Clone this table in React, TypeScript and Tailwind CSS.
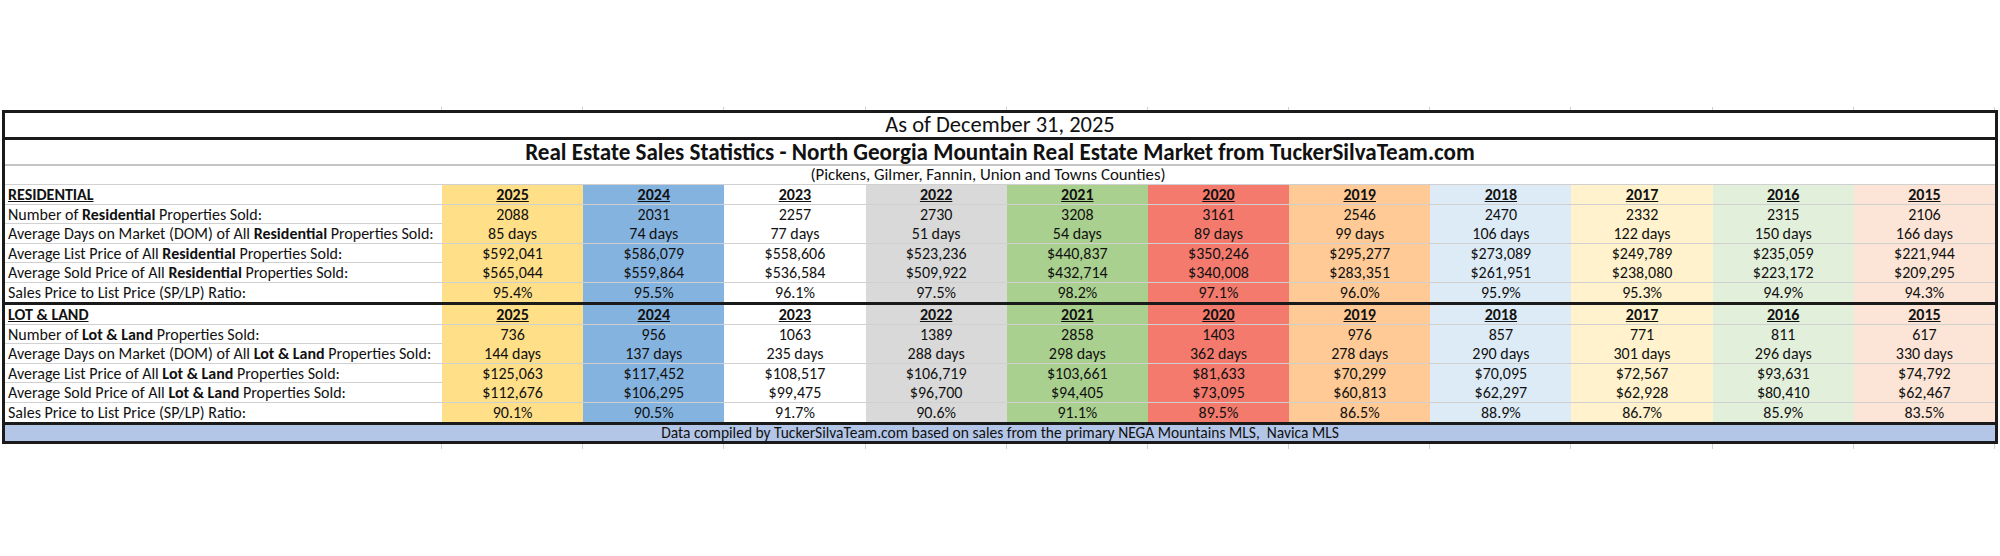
const years = ["2025", "2024", "2023", "2022", "2021", "2020", "2019", "2018", "2017", "2016", "2015"];

// fill colour of each year column, same order as years
const fills = [
  "bg-[#FFDF88]",
  "bg-[#85B3E0]",
  "bg-white",
  "bg-[#D9D9D9]",
  "bg-[#A9D08E]",
  "bg-[#F47A6D]",
  "bg-[#FFCA95]",
  "bg-[#DDEBF7]",
  "bg-[#FFF2CC]",
  "bg-[#E2EFDA]",
  "bg-[#FCE4D6]",
];

type Row = { pre: string; bold?: string; post?: string; values: string[] };

const residential: Row[] = [
  { pre: "Number of ", bold: "Residential", post: " Properties Sold:", values: ["2088", "2031", "2257", "2730", "3208", "3161", "2546", "2470", "2332", "2315", "2106"] },
  { pre: "Average Days on Market (DOM) of All ", bold: "Residential", post: " Properties Sold:", values: ["85 days", "74 days", "77 days", "51 days", "54 days", "89 days", "99 days", "106 days", "122 days", "150 days", "166 days"] },
  { pre: "Average List Price of All ", bold: "Residential", post: " Properties Sold:", values: ["$592,041", "$586,079", "$558,606", "$523,236", "$440,837", "$350,246", "$295,277", "$273,089", "$249,789", "$235,059", "$221,944"] },
  { pre: "Average Sold Price of All ", bold: "Residential", post: " Properties Sold:", values: ["$565,044", "$559,864", "$536,584", "$509,922", "$432,714", "$340,008", "$283,351", "$261,951", "$238,080", "$223,172", "$209,295"] },
  { pre: "Sales Price to List Price (SP/LP) Ratio:", values: ["95.4%", "95.5%", "96.1%", "97.5%", "98.2%", "97.1%", "96.0%", "95.9%", "95.3%", "94.9%", "94.3%"] },
];

const lotLand: Row[] = [
  { pre: "Number of ", bold: "Lot & Land", post: " Properties Sold:", values: ["736", "956", "1063", "1389", "2858", "1403", "976", "857", "771", "811", "617"] },
  { pre: "Average Days on Market (DOM) of All ", bold: "Lot & Land", post: " Properties Sold:", values: ["144 days", "137 days", "235 days", "288 days", "298 days", "362 days", "278 days", "290 days", "301 days", "296 days", "330 days"] },
  { pre: "Average List Price of All ", bold: "Lot & Land", post: " Properties Sold:", values: ["$125,063", "$117,452", "$108,517", "$106,719", "$103,661", "$81,633", "$70,299", "$70,095", "$72,567", "$93,631", "$74,792"] },
  { pre: "Average Sold Price of All ", bold: "Lot & Land", post: " Properties Sold:", values: ["$112,676", "$106,295", "$99,475", "$96,700", "$94,405", "$73,095", "$60,813", "$62,297", "$62,928", "$80,410", "$62,467"] },
  { pre: "Sales Price to List Price (SP/LP) Ratio:", values: ["90.1%", "90.5%", "91.7%", "90.6%", "91.1%", "89.5%", "86.5%", "88.9%", "86.7%", "85.9%", "83.5%"] },
];

const cols = "grid grid-cols-[437px_repeat(11,minmax(0,1fr))]";

const Section = ({ title, rows, first }: { title: string; rows: Row[]; first?: boolean }) => (
  <div className={first ? "" : "border-t-[3px] border-[#1a1a1a]"}>
    <div className={`${cols} h-[19.5px] border-b border-[#d0d0d0]`}>
      <div className="pl-[3px] font-bold underline leading-[19px]">{title}</div>
      {years.map((y, i) => (
        <div key={y} className={`${fills[i]} text-center font-bold underline leading-[19px]`}>
          {y}
        </div>
      ))}
    </div>
    {rows.map((row, r) => (
      <div
        key={row.pre + (row.bold ?? "")}
        className={`${cols} h-[19.5px] ${r < rows.length - 1 ? "border-b border-[#d0d0d0]" : ""}`}
      >
        <div className="pl-[3px] leading-[19px] whitespace-nowrap">
          {row.pre}
          {row.bold && <span className="font-bold">{row.bold}</span>}
          {row.post}
        </div>
        {row.values.map((v, i) => (
          <div key={i} className={`${fills[i]} text-center leading-[19px]`}>
            {v}
          </div>
        ))}
      </div>
    ))}
  </div>
);

// faint spreadsheet gridline stubs peeking out above / below the table
const Ticks = ({ h }: { h: string }) => (
  <div className={`${cols} ${h} px-[3px]`}>
    {Array.from({ length: 12 }).map((_, i) => (
      <div key={i} className="border-r border-[#d0d0d0]" />
    ))}
  </div>
);

export default function App() {
  return (
    <div className="w-[2000px] h-[556px] bg-white pt-[107px] px-[2px] text-[16px] text-[#111] font-['Carlito','Lato',sans-serif]">
      <Ticks h="h-[3px]" />
      <div className="border-[3px] border-[#1a1a1a]">
        {/* Date */}
        <div className="h-[27px] flex items-center justify-center text-[22.5px] border-b-[3px] border-[#1a1a1a]">
          As of December 31, 2025
        </div>
        {/* Title */}
        <div className="h-[26px] flex items-center justify-center text-[23.1px] font-bold border-b-2 border-[#c4c4c4]">
          Real Estate Sales Statistics - North Georgia Mountain Real Estate Market from TuckerSilvaTeam.com
        </div>
        {/* Counties */}
        <div className="h-[19px] flex items-center justify-center pr-[24px] text-[16.8px] border-b border-[#d0d0d0]">
          (Pickens, Gilmer, Fannin, Union and Towns Counties)
        </div>

        <Section title="RESIDENTIAL" rows={residential} first />
        <Section title="LOT & LAND" rows={lotLand} />

        {/* Footer */}
        <div className="h-[19px] flex items-center justify-center bg-[#B4C6E7] text-[15.5px] border-t-[3px] border-[#1a1a1a]">
          Data compiled by TuckerSilvaTeam.com based on sales from the primary NEGA Mountains MLS,&nbsp; Navica MLS
        </div>
      </div>
      <Ticks h="h-[5px]" />
    </div>
  );
}
